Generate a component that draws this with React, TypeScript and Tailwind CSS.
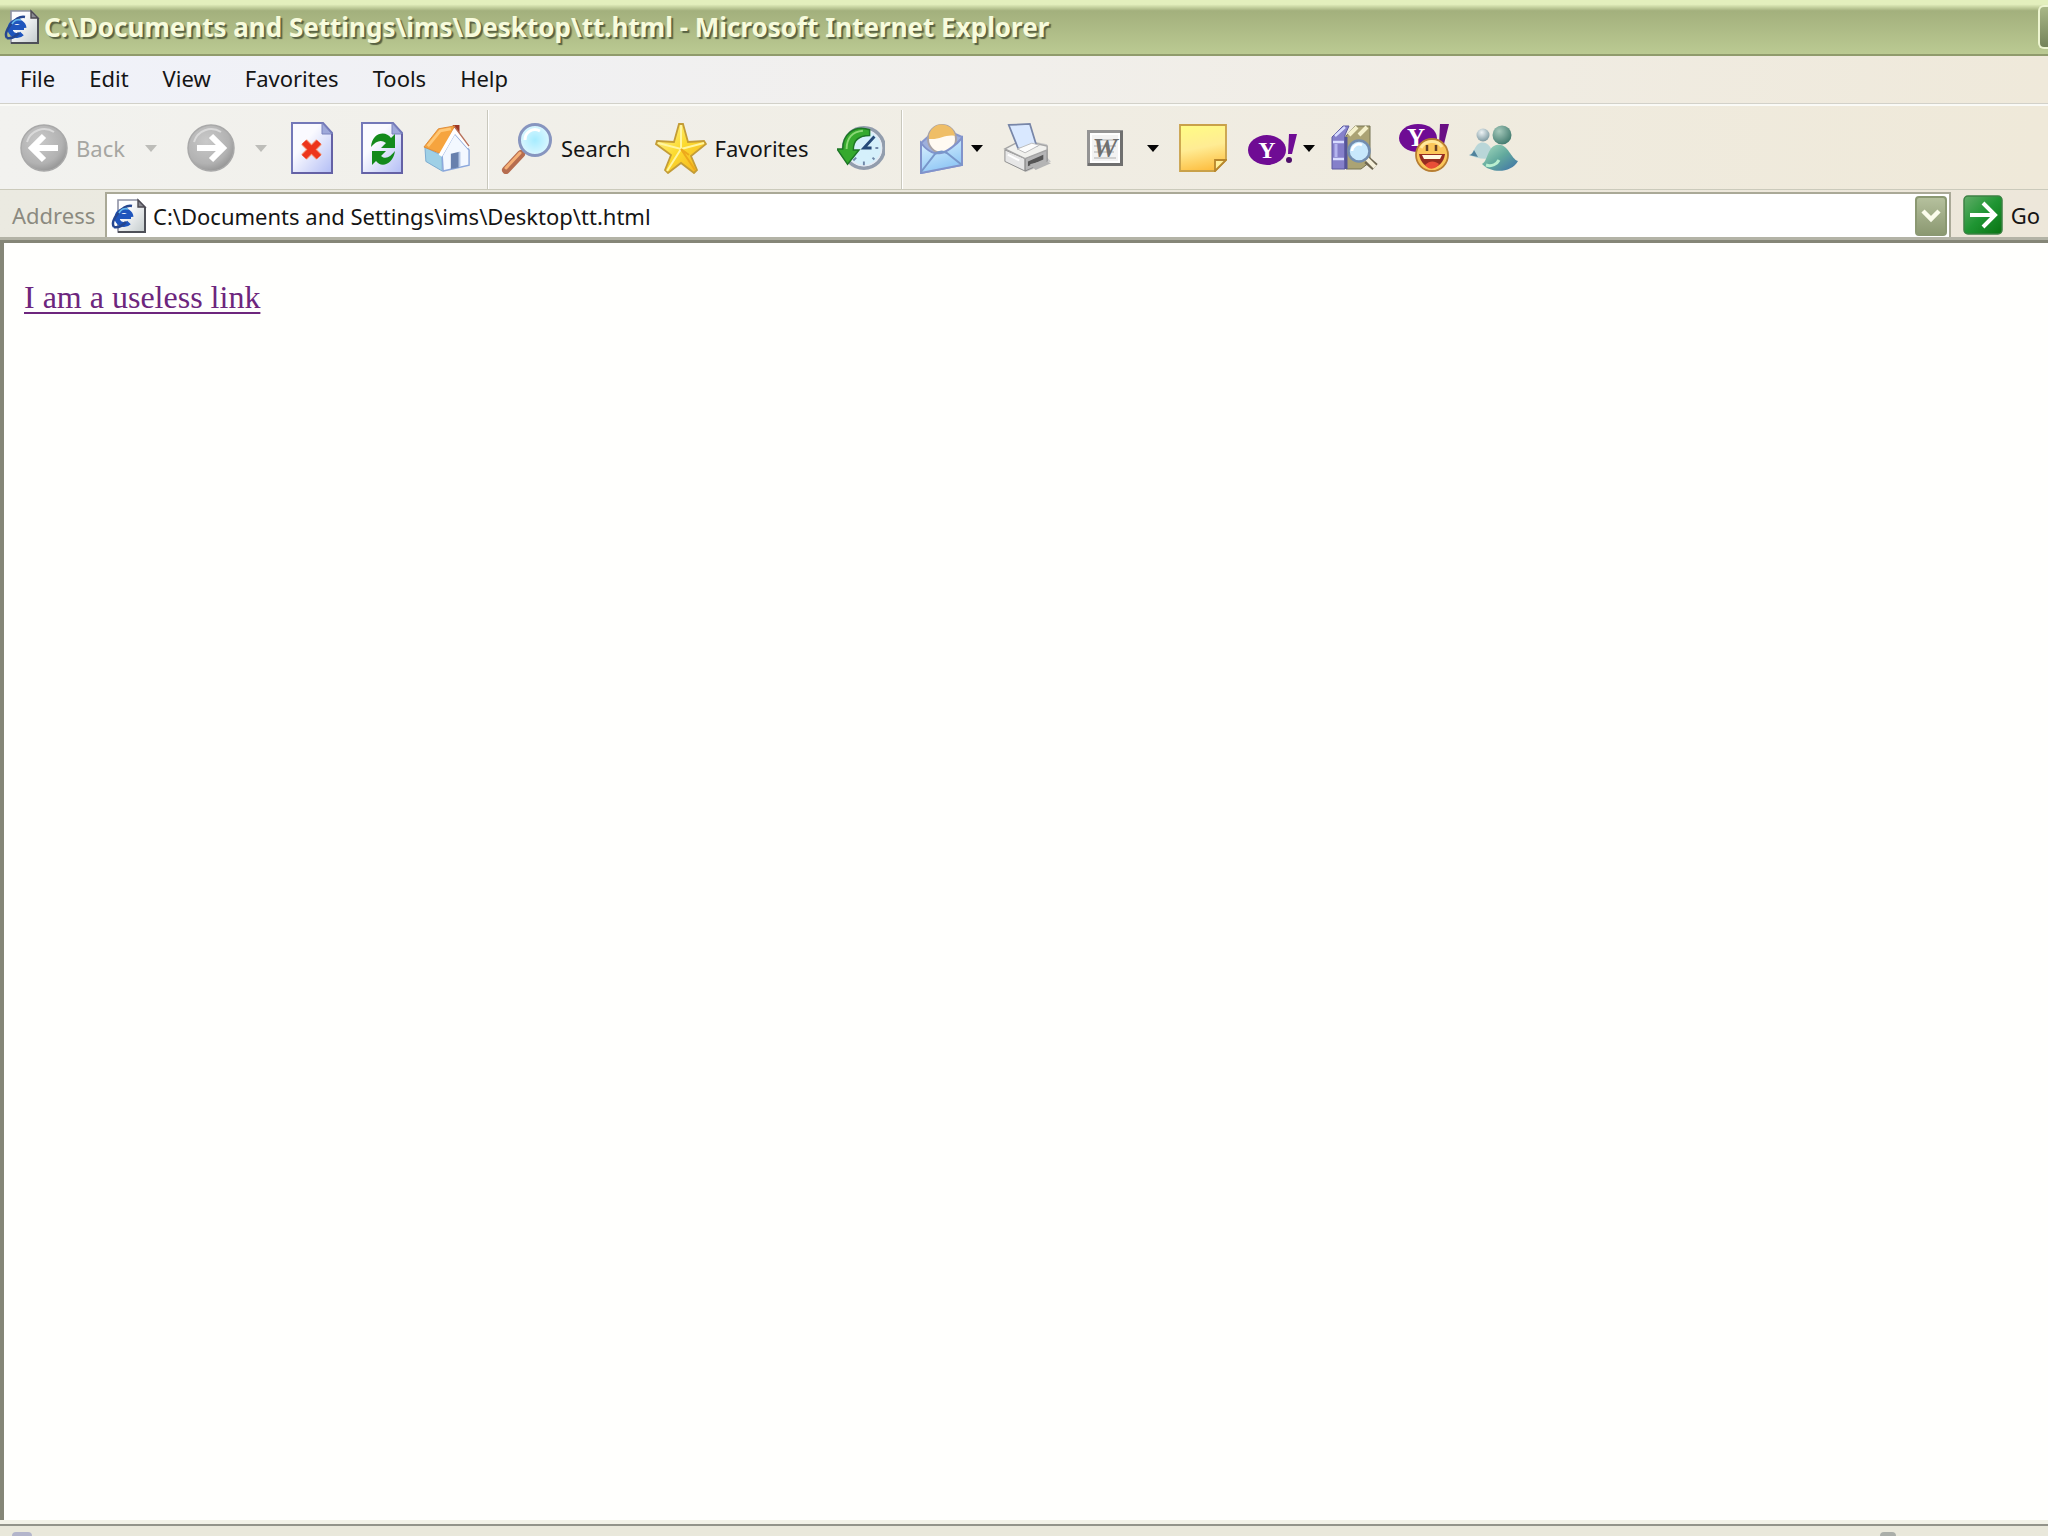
import React from 'react';

const menus = ['File', 'Edit', 'View', 'Favorites', 'Tools', 'Help'];
const path = 'C:\\Documents and Settings\\ims\\Desktop\\tt.html';

const PageIcon: React.FC<{ className: string }> = ({ className }) => (
  <svg viewBox="0 0 36 36" className={className} aria-hidden="true">
    <defs>
      <linearGradient id="paper" x1="0" y1="0" x2="1" y2="1">
        <stop offset="0.3" stopColor="#fdfdff" />
        <stop offset="1" stopColor="#c3cbcc" />
      </linearGradient>
    </defs>
    <path d="M7 2h20l7 7v25H7z" fill="url(#paper)" stroke="#8f92a5" strokeWidth="1.6" />
    <path d="M34 9v25H7" fill="none" stroke="#4e5058" strokeWidth="2" />
    <path d="M27 2v7h7z" fill="#8b8c94" stroke="#4d4a52" strokeWidth="1.4" />
    <path d="M20 19a7 7 0 1 0-2 5.500M6 18.500h14" fill="none" stroke="#1f55bd" strokeWidth="5" />
    <path d="M3 29C-2 23 12 6 21 8M3 29c4 1 9-2 12-5" fill="none" stroke="#26468f" strokeWidth="2.500" />
    <path d="M8 15c2-4 6-5 9-4" fill="none" stroke="#62b6ee" strokeWidth="1.800" />
  </svg>
);

const ArrowCircle: React.FC<{ forward?: boolean }> = ({ forward }) => (
  <svg viewBox="0 0 48 48" className="size-12" aria-hidden="true">
    <defs>
      <radialGradient id="disc" cx="0.4" cy="0.35" r="0.7">
        <stop offset="0" stopColor="#c9c9c9" />
        <stop offset="0.7" stopColor="#b2b2b2" />
        <stop offset="1" stopColor="#929292" />
      </radialGradient>
    </defs>
    <circle cx="24" cy="24" r="23" fill="url(#disc)" stroke="#a9a9a9" strokeWidth="1.5" />
    <path d="M7 18A18 18 0 0 1 34 8" fill="none" stroke="#dadada" strokeWidth="2" />
    <path
      d={forward ? 'M10 24h25M24 12l12 12-12 12' : 'M38 24H13M24 12L12 24l12 12'}
      fill="none"
      stroke="#fff"
      strokeWidth="6"
    />
  </svg>
);

const Caret: React.FC<{ faded?: boolean }> = ({ faded }) => (
  <svg viewBox="0 0 12 8" className="h-2 w-3" aria-hidden="true">
    <path d="M0 1h12L6 8z" fill={faded ? '#bdbdb9' : '#050505'} />
  </svg>
);

const Sheet: React.FC<{ children: React.ReactNode }> = ({ children }) => (
  <svg viewBox="0 0 42 52" className="h-[52px] w-[42px]" aria-hidden="true">
    <defs>
      <linearGradient id="sheet" x1="0" y1="0" x2="1" y2="1">
        <stop offset="0.35" stopColor="#fafaff" />
        <stop offset="1" stopColor="#b2bdf5" />
      </linearGradient>
    </defs>
    <path d="M1 1h31l9 10v40H1z" fill="url(#sheet)" stroke="#7378b8" strokeWidth="2" />
    <path d="M31 1v11h10z" fill="#9fa9da" stroke="#7b83bd" strokeWidth="1" />
    <path d="M41 12v39H1" fill="none" stroke="#6461a5" strokeWidth="2" />
    {children}
  </svg>
);

const HomeIcon = () => (
  <svg viewBox="0 0 50 50" className="size-12" aria-hidden="true">
    <path d="M31 1h7v14l-7-6z" fill="#9c3626" />
    <path d="M2 24l18 9v16L3 39z" fill="#9ed0e6" stroke="#79a9cf" />
    <path d="M20 33L33 10l15 17v16L21 49z" fill="#f3f8ff" stroke="#8ca8dc" strokeWidth="1.5" />
    <path d="M1 24L16 5 33 2 19 31z" fill="#f6a43e" stroke="#dc8b3a" />
    <path d="M5 23L18 7 29 5" fill="none" stroke="#ffc776" strokeWidth="3" />
    <path d="M18 33L33 7l15 17" fill="none" stroke="#fff" strokeWidth="4" />
    <path d="M33 3l15 20" stroke="#b66f58" strokeWidth="1.5" />
    <path d="M29 31l9-2v16l-9 2z" fill="#6880ad" />
    <path d="M38 29v16" stroke="#b7c8e7" strokeWidth="2" />
  </svg>
);

const SearchIcon = () => (
  <svg viewBox="0 0 52 52" className="size-[52px]" aria-hidden="true">
    <defs>
      <radialGradient id="lens">
        <stop offset="0" stopColor="#a6ecff" />
        <stop offset="1" stopColor="#dcf7ff" />
      </radialGradient>
    </defs>
    <path d="M20 32L5 48" stroke="#b66d4f" strokeWidth="8" strokeLinecap="round" />
    <path d="M19 31L5 46" stroke="#f5b077" strokeWidth="3" strokeLinecap="round" />
    <circle cx="34" cy="18" r="15.500" fill="url(#lens)" stroke="#8795bf" strokeWidth="3" />
    <path d="M24 18a10 10 0 0 1 15-9" fill="none" stroke="#fff" strokeWidth="3" />
  </svg>
);

const StarIcon = () => (
  <svg viewBox="0 0 52 52" className="size-[52px]" aria-hidden="true">
    <defs>
      <linearGradient id="star" x1="0" y1="0" x2="1" y2="1">
        <stop offset="0" stopColor="#fff6a0" />
        <stop offset="0.5" stopColor="#fcda2d" />
        <stop offset="1" stopColor="#f3ad20" />
      </linearGradient>
    </defs>
    <path
      d="M24 2l4 0 5 18 16-1 2 3-15 12 6 14-3 3-13-10-13 10-3-3 6-15L1 22l1-3 17 1z"
      fill="url(#star)"
      stroke="#c39c37"
      strokeWidth="1.8"
    />
    <path d="M26 3v24L3 21M26 27l23-6M26 27L12 49" fill="none" stroke="#fff5a0" strokeWidth="2" />
    <path d="M26 27l14 21M26 27l8 6" fill="none" stroke="#eda91c" strokeWidth="2" />
  </svg>
);

const HistoryIcon = () => (
  <svg viewBox="0 0 50 50" className="size-12" aria-hidden="true">
    <circle cx="28" cy="25" r="21" fill="#d5f0fb" stroke="#929dad" strokeWidth="4" />
    <circle cx="28" cy="25" r="18.500" fill="none" stroke="#e5eaf2" strokeWidth="1.5" />
    <path d="M28 10v3M43 25h-3M28 43v-4M17 38l3-3M39 37l-2-2" stroke="#7088a8" strokeWidth="2" />
    <path d="M39 13L28 25h8" fill="none" stroke="#264a79" strokeWidth="3" />
    <path d="M34 6C17 0 6 12 6 26H0l11 16 12-15h-6c0-9 5-15 17-15z" fill="#35a92d" stroke="#1d7626" strokeWidth="1.5" />
    <path d="M10 26c0-11 6-18 17-19" fill="none" stroke="#8bd876" strokeWidth="2" />
  </svg>
);

const MailIcon = () => (
  <svg viewBox="0 0 46 52" className="h-[52px] w-[46px]" aria-hidden="true">
    <defs>
      <linearGradient id="mail" x1="0" y1="0" x2="0.4" y2="1">
        <stop offset="0" stopColor="#e3f7ff" />
        <stop offset="1" stopColor="#8fc6f5" />
      </linearGradient>
    </defs>
    <path d="M2 21L20 5l23 10v28L2 51z" fill="#9eb0dc" stroke="#8797ce" strokeWidth="2" />
    <circle cx="23" cy="17" r="14" fill="#fffaf2" stroke="#a9a3a6" strokeWidth="2" />
    <path d="M10 17a13 13 0 0 1 26-3c-9-2-15 4-26 3z" fill="#efbe67" />
    <path d="M2 21c8 10 14 11 20 10s16-9 21-15v27L2 51z" fill="url(#mail)" stroke="#8193cb" strokeWidth="2" />
    <path d="M2 50l14-18c4-3 8-3 12-1l15 12" fill="none" stroke="#7896ca" strokeWidth="2" />
  </svg>
);

const PrinterIcon = () => (
  <svg viewBox="0 0 50 52" className="h-[52px] w-12" aria-hidden="true">
    <path d="M2 27l18-10 26 5v14l4 4-26 11L2 40z" fill="#c9c9c9" />
    <path d="M2 28l21 9v13L2 40z" fill="#e7e7e7" stroke="#8e8e8e" />
    <path d="M23 37l23-10v13L23 50z" fill="#b5b5b6" stroke="#858585" />
    <path d="M2 27l17-9 27 6v4L23 37z" fill="#f1f1ee" stroke="#a5a5a5" strokeWidth="1.5" />
    <path d="M6 2l22-1 7 23-19 3z" fill="#d9e8ff" stroke="#7886a8" strokeWidth="1.8" />
    <path d="M15 27l15-6 8 2-15 8z" fill="#fcfcfc" stroke="#bcbcbc" />
    <path d="M26 40l16-7v5l-16 7z" fill="#555" />
    <path d="M28 43l15-4 7 3-16 7z" fill="#b4b4b4" />
    <path d="M5 33l12 6" stroke="#fff" strokeWidth="2" />
  </svg>
);

const WordIcon = () => (
  <svg viewBox="0 0 36 36" className="size-9" aria-hidden="true">
    <rect x="1.500" y="1.500" width="33" height="33" fill="#f3f3f3" stroke="#949494" strokeWidth="3" />
    <path d="M34.500 1v33.500H1" fill="none" stroke="#6f6f6f" strokeWidth="3" />
    <rect x="4" y="4" width="28" height="28" fill="none" stroke="#fff" strokeWidth="2" />
    <path d="M8 10h22M7 16h22M7 22h20M7 28h22" stroke="#c6c6c6" strokeWidth="1.5" />
    <text x="18" y="27" textAnchor="middle" fontFamily="Liberation Serif, serif" fontSize="28" fontWeight="700" fontStyle="italic" fill="#707070">W</text>
  </svg>
);

const NoteIcon = () => (
  <svg viewBox="0 0 48 48" className="size-12" aria-hidden="true">
    <defs>
      <linearGradient id="note" x1="0.3" y1="0" x2="0.5" y2="1">
        <stop offset="0" stopColor="#fffb85" />
        <stop offset="0.5" stopColor="#ffec94" />
        <stop offset="1" stopColor="#fdbf42" />
      </linearGradient>
    </defs>
    <path d="M1 1h46v35L36 47H1z" fill="url(#note)" stroke="#c9a149" strokeWidth="1.800" />
    <path d="M36 47V36h11z" fill="#fff09a" stroke="#b7862c" strokeWidth="1.8" />
  </svg>
);

const YahooIcon = () => (
  <svg viewBox="0 0 52 36" className="h-9 w-[52px]" aria-hidden="true">
    <ellipse cx="20" cy="20" rx="19" ry="15" fill="#6f0c94" />
    <text x="20" y="28" textAnchor="middle" fontFamily="Liberation Serif, serif" fontSize="24" fontWeight="700" fill="#fff">Y</text>
    <path d="M42 4h8l-5 20h-4z" fill="#6f0c94" />
    <circle cx="42" cy="30" r="3" fill="#4f0f6a" />
  </svg>
);

const BooksIcon = () => (
  <svg viewBox="0 0 48 48" className="size-12" aria-hidden="true">
    <path d="M1 13L12 2h6l-4 9v34H1z" fill="#8580ca" stroke="#5c5ba0" />
    <path d="M4 12L14 3M2 18h11M2 35h11" stroke="#d8dcff" strokeWidth="2.500" />
    <path d="M5 20v13" stroke="#b4b5ef" strokeWidth="3" />
    <path d="M15 12L24 2h15v36l-9 7H15z" fill="#aba374" stroke="#777454" />
    <path d="M18 11l8-8M28 11l8-8" stroke="#f4f0cb" strokeWidth="4" />
    <path d="M15 13v32" stroke="#555598" strokeWidth="3" />
    <path d="M36 36l8 7" stroke="#6d6651" strokeWidth="8" />
    <path d="M36 35l8 8" stroke="#f5f0da" strokeWidth="4" />
    <circle cx="28" cy="27" r="10.500" fill="#c8e8fc" stroke="#738daf" strokeWidth="2.500" />
    <path d="M21 27a7 7 0 0 1 10-6" fill="none" stroke="#fff" strokeWidth="2.500" />
  </svg>
);

const MessengerIcon = () => (
  <svg viewBox="0 0 50 50" className="size-[50px]" aria-hidden="true">
    <ellipse cx="19" cy="15" rx="19" ry="14" fill="#6f0c94" />
    <text x="17" y="23" textAnchor="middle" fontFamily="Liberation Serif, serif" fontSize="25" fontWeight="700" fill="#fff">Y</text>
    <path d="M41 1h9l-5 20h-5z" fill="#6a0f84" />
    <circle cx="33" cy="32" r="16" fill="#fbc659" stroke="#b77e32" strokeWidth="1.800" />
    <path d="M22 25c4-8 16-9 21-1" fill="none" stroke="#ffe89b" strokeWidth="3" />
    <path d="M28 22v6M37 22v6" stroke="#664126" strokeWidth="2.500" />
    <path d="M20 31h26c-2 17-23 19-26 0z" fill="#952c20" />
    <path d="M23 32h20l-2 4H25z" fill="#fff8df" />
    <path d="M26 42c5-5 10-4 14-1-3 6-11 6-14 1z" fill="#e94e37" />
  </svg>
);

const BuddiesIcon = () => (
  <svg viewBox="0 0 50 48" className="h-12 w-[50px]" aria-hidden="true">
    <defs>
      <radialGradient id="head" cx="0.35" cy="0.3" r="0.8">
        <stop offset="0" stopColor="#a5c9bb" />
        <stop offset="1" stopColor="#3a7468" />
      </radialGradient>
      <radialGradient id="smallHead" cx="0.4" cy="0.3" r="0.7">
        <stop offset="0" stopColor="#eef3f5" />
        <stop offset="1" stopColor="#7e9aa2" />
      </radialGradient>
      <linearGradient id="body" x1="0" y1="0" x2="1" y2="1">
        <stop offset="0" stopColor="#a8dcc0" />
        <stop offset="0.5" stopColor="#62a99d" />
        <stop offset="1" stopColor="#3c6ea8" />
      </linearGradient>
    </defs>
    <path d="M0 31c5-1 6-11 11-12 7-2 12 4 14 14-8 3-16 2-25-2z" fill="#b9d6d8" />
    <path d="M0 31c2 0 4-2 5-5l4 7z" fill="#4f829c" />
    <circle cx="14" cy="11" r="6.500" fill="url(#smallHead)" />
    <path d="M13 40c6-3 5-16 14-19 12-3 14 13 22 16-6 12-27 13-36 3z" fill="url(#body)" />
    <circle cx="33" cy="11" r="9.500" fill="url(#head)" />
    <path d="M17 41c6 2 11-1 13-5" fill="none" stroke="#b9efd0" strokeWidth="3" />
  </svg>
);

const Separator = () => <div className="w-[2px] self-stretch border-r border-white bg-[#c9c8bd]" />;

function App() {
  return (
    <div className="flex min-h-screen flex-col overflow-hidden bg-white font-['Noto_Sans',sans-serif] text-[22px] leading-7 text-[#151515]">
      <header className="flex h-14 items-center border-b-2 border-[#909b6c] bg-linear-to-b from-[#e3efbd] from-8% via-[#a3b07d] via-20% to-[#bbca92] pl-1">
        <PageIcon className="size-9 shrink-0" />
        <h1 className="ml-1 whitespace-nowrap text-[26px] font-bold text-[#f7fbdc] [text-shadow:2px_2px_1px_#586142]">
          {path} - Microsoft Internet Explorer
        </h1>
        <button aria-label="Minimize" className="ml-auto h-11 w-2.5 rounded-l-md border-2 border-r-0 border-[#edf5d0] bg-linear-to-b from-[#a9b787] to-[#75845a]" />
      </header>

      <nav className="flex h-12 items-center border-b border-[#d2d1c9] bg-linear-to-r from-[#f0f2fa] via-[#f1efeb] to-[#efe9da] pl-[3px] pb-1">
        {menus.map(name => (
          <button key={name} className="px-[17px]">{name}</button>
        ))}
      </nav>

      <div className="flex h-[86px] items-center border-t-2 border-b border-t-[#fafaf6] border-b-[#cbcabb] bg-linear-to-r from-[#f2f2ef] via-[#f0ede4] to-[#efe9d9] pl-5">
        <button disabled className="flex items-center gap-2 text-[#a6a6a2]">
          <ArrowCircle /> Back
        </button>
        <button disabled aria-label="Back history" className="ml-5"><Caret faded /></button>
        <button disabled aria-label="Forward" className="ml-[30px]"><ArrowCircle forward /></button>
        <button disabled aria-label="Forward history" className="ml-5"><Caret faded /></button>
        <button aria-label="Stop" className="ml-6">
          <Sheet>
            <path d="M13 20l15 15M28 20L13 35" stroke="#f5a183" strokeWidth="8" />
            <path d="M13 20l15 15M28 20L13 35" stroke="#ed351b" strokeWidth="6" />
          </Sheet>
        </button>
        <button aria-label="Refresh" className="ml-7">
          <Sheet>
            <path d="M10 25c1-15 15-17 20-9l4-4v14H20l5-5c-5-4-10-2-15 4z" fill="#138a1b" />
            <path d="M34 29c-2 14-14 17-19 10l-4 4V29h14l-5 5c5 4 9 1 14-5z" fill="#138a1b" />
          </Sheet>
        </button>
        <button aria-label="Home" className="ml-5"><HomeIcon /></button>
        <div className="ml-4 flex self-stretch pt-1"><Separator /></div>
        <button className="ml-3 flex items-center gap-2"><SearchIcon /> Search</button>
        <button className="ml-6 flex items-center gap-2"><StarIcon /> Favorites</button>
        <button aria-label="History" className="ml-7"><HistoryIcon /></button>
        <div className="ml-4 flex self-stretch pt-1"><Separator /></div>
        <button aria-label="Mail" className="ml-4 flex items-center gap-1.5"><MailIcon /><Caret /></button>
        <button aria-label="Print" className="ml-5"><PrinterIcon /></button>
        <button aria-label="Edit with Word" className="ml-9 flex items-center gap-6"><WordIcon /><Caret /></button>
        <button aria-label="Notes" className="ml-5"><NoteIcon /></button>
        <button aria-label="Yahoo" className="ml-5 flex items-center gap-1"><YahooIcon /><Caret /></button>
        <button aria-label="Research" className="ml-4"><BooksIcon /></button>
        <button aria-label="Yahoo Messenger" className="ml-5"><MessengerIcon /></button>
        <button aria-label="Messenger" className="ml-5"><BuddiesIcon /></button>
      </div>

      <div className="flex h-[50px] items-center border-b-3 border-[#b3b3a6] bg-linear-to-r from-[#ebeae1] to-[#ede7da] pt-[2px] pl-3">
        <label htmlFor="address" className="w-[93px] text-[#8b8a80]">Address</label>
        <div className="flex h-full flex-1 items-center border-2 border-b-0 border-[#aaa997] bg-white pl-1">
          <PageIcon className="size-9 shrink-0" />
          <input id="address" defaultValue={path} className="ml-1.5 min-w-0 flex-1 bg-transparent outline-none" />
          <button aria-label="Show addresses" className="mr-0.5 flex h-10 w-8 items-center justify-center rounded-sm border-2 border-[#8b9872] bg-linear-to-b from-[#b5c09d] to-[#8c9972]">
            <svg viewBox="0 0 20 16" className="h-4 w-5" aria-hidden="true">
              <path d="M2 3l8 8 8-8" fill="none" stroke="#fbfcec" strokeWidth="4.500" />
            </svg>
          </button>
        </div>
        <button className="ml-3 mr-2 flex items-center gap-2">
          <svg viewBox="0 0 40 40" className="size-10" aria-hidden="true">
            <defs>
              <linearGradient id="go" x1="0" y1="0" x2="1" y2="1">
                <stop offset="0" stopColor="#62ad69" />
                <stop offset="0.5" stopColor="#1f9533" />
                <stop offset="1" stopColor="#087311" />
              </linearGradient>
            </defs>
            <rect x="1" y="1" width="38" height="38" rx="4" fill="url(#go)" stroke="#3c8144" strokeWidth="1.5" />
            <path d="M7 20h25M20 8l12 12-12 12" fill="none" stroke="#fff" strokeWidth="4" />
          </svg>
          Go
        </button>
      </div>

      <main className="flex-1 border-t-3 border-l-4 border-[#858677] bg-[#fffffd] px-5 py-9">
        <a href="#" className="font-['Liberation_Serif',serif] text-[32px] leading-9 text-[#6d267d] underline decoration-2 underline-offset-4">
          I am a useless link
        </a>
      </main>

      <footer className="h-4 border-t-4 border-[#f2f2e8] bg-[#fffffd]">
        <div className="flex h-3 items-end justify-between border-t-2 border-[#92938a] bg-[#e9e8db] pl-3">
          <div className="h-1 w-5 rounded-t-sm bg-[#b3b5cb]" />
          <div className="mr-[152px] h-1 w-4 rounded-t-full bg-[#aaaea9]" />
        </div>
      </footer>
    </div>
  );
}

export default App;
